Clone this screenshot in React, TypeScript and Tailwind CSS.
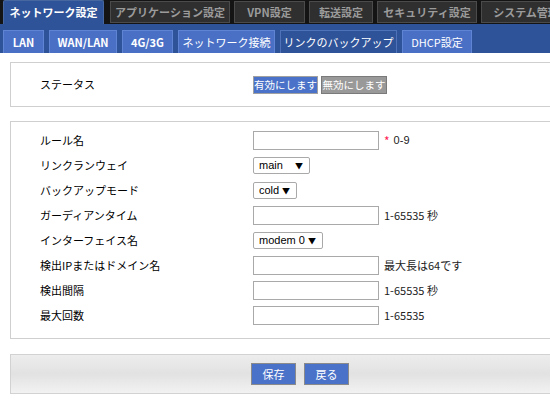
import React from "react";

const jp = "font-['Noto_Sans_CJK_JP','Noto_Sans',sans-serif]";

const TOP_TABS = [
  { label: "ネットワーク設定", cls: "w-[101px]", active: true },
  { label: "アプリケーション設定", cls: "w-[120px] ml-[2px]" },
  { label: "VPN設定", cls: "w-[71px]" },
  { label: "転送設定", cls: "w-[64px]" },
  { label: "セキュリティ設定", cls: "w-[100px]" },
  { label: "システム管理", cls: "w-[90px]" },
];

const SUB_TABS = [
  { label: "LAN", cls: "w-[41px] font-bold" },
  { label: "WAN/LAN", cls: "w-[68px] font-bold" },
  { label: "4G/3G", cls: "w-[51px] font-bold" },
  { label: "ネットワーク接続", cls: "w-[97px]" },
  { label: "リンクのバックアップ", cls: "w-[117px]", active: true },
  { label: "DHCP設定", cls: "w-[70px]" },
];

const Input = () => (
  <div className="w-[126px] h-[19px] border border-[#a9a9a9] bg-white" />
);

const Select = ({ value, w }: { value: string; w: string }) => (
  <div
    className={`${w} h-[17px] border border-[#a9a9a9] rounded-[2px] bg-white flex items-center justify-between pl-[5px] pr-[6px] text-[11px] text-black`}
  >
    <span className="font-['Liberation_Sans',sans-serif] leading-none">{value}</span>
    <span className="text-[8px] leading-none">▼</span>
  </div>
);

const Hint = ({ children }: { children: React.ReactNode }) => (
  <span className="ml-[5px] text-[11px] text-[#222] whitespace-nowrap">{children}</span>
);

const Row = ({ label, children }: { label: string; children: React.ReactNode }) => (
  <div className="h-[25px] flex items-center">
    <div className="w-[213px] text-[11px] text-black whitespace-nowrap">{label}</div>
    <div className="flex items-center">{children}</div>
  </div>
);

export default function App() {
  return (
    <div className={`w-[550px] h-[404px] overflow-hidden bg-white ${jp}`}>
      {/* top tabs */}
      <div className="h-6 bg-[#141414] flex items-start gap-[4px] pl-[3px] overflow-hidden">
        {TOP_TABS.map((t) =>
          t.active ? (
            <div
              key={t.label}
              className={`${t.cls} h-6 shrink-0 rounded-t-[2px] border border-b-0 border-[#46679f] bg-[#2f5399] text-white text-[11px] font-bold flex items-center justify-center whitespace-nowrap`}
            >
              {t.label}
            </div>
          ) : (
            <div
              key={t.label}
              className={`${t.cls} h-[22px] mt-[1px] shrink-0 border border-[#4b4b4b] bg-[#2f2f2f] text-[#9b9b9b] text-[11px] font-bold flex items-center justify-center whitespace-nowrap`}
            >
              {t.label}
            </div>
          )
        )}
      </div>

      {/* sub tabs */}
      <div className="h-[29px] bg-[#2f5399] flex items-end gap-[5px] pl-[3px]">
        {SUB_TABS.map((t) => (
          <div
            key={t.label}
            className={`${t.cls} h-[23px] shrink-0 border border-b-0 text-white text-[11px] flex items-center justify-center whitespace-nowrap ${
              t.active ? "bg-[#2f5399] border-[#5072b8]" : "bg-[#4a70c6] border-[#5f84d4]"
            }`}
          >
            {t.label}
          </div>
        ))}
      </div>

      {/* status panel */}
      <div className="mt-[9px] ml-[10px] w-[560px] h-[45px] border border-[#cfcfcf] flex items-center pl-[29px]">
        <div className="w-[213px] text-[11px] text-black">ステータス</div>
        <div className="flex gap-[3px]">
          <div className="w-[65px] h-[18px] border border-[#a0a0a0] bg-[#4a72c8] text-white text-[10.5px] flex items-center justify-center whitespace-nowrap">
            有効にします
          </div>
          <div className="w-[66px] h-[18px] border border-[#7a7a7a] bg-[#999999] text-white text-[10.5px] flex items-center justify-center whitespace-nowrap">
            無効にします
          </div>
        </div>
      </div>

      {/* settings panel */}
      <div className="mt-[14px] ml-[10px] w-[560px] border border-[#cfcfcf] pt-[6px] pb-[10px] pl-[29px]">
        <Row label="ルール名">
          <Input />
          <span className="ml-[5px] text-[12px] text-[#ff2255] leading-none">*</span>
          <span className="ml-[4px] text-[11px] text-[#222] font-['Liberation_Sans',sans-serif]">0-9</span>
        </Row>
        <Row label="リンクランウェイ">
          <Select value="main" w="w-[57px]" />
        </Row>
        <Row label="バックアップモード">
          <Select value="cold" w="w-[44px]" />
        </Row>
        <Row label="ガーディアンタイム">
          <Input />
          <Hint>1-65535 秒</Hint>
        </Row>
        <Row label="インターフェイス名">
          <Select value="modem 0" w="w-[70px]" />
        </Row>
        <Row label="検出IPまたはドメイン名">
          <Input />
          <Hint>最大長は64です</Hint>
        </Row>
        <Row label="検出間隔">
          <Input />
          <Hint>1-65535 秒</Hint>
        </Row>
        <Row label="最大回数">
          <Input />
          <Hint>1-65535</Hint>
        </Row>
      </div>

      {/* footer */}
      <div className="mt-[15px] ml-[10px] w-[560px] h-[40px] border border-[#d2d2d2] bg-gradient-to-b from-[#ededed] via-[#e2e2e2] to-[#f2f2f2] flex items-center pl-[240px] gap-[8px]">
        <div className="w-[45px] h-[22px] border border-[#8a8a8a] bg-[#4a72c8] text-white text-[11px] flex items-center justify-center">
          保存
        </div>
        <div className="w-[45px] h-[22px] border border-[#8a8a8a] bg-[#4a72c8] text-white text-[11px] flex items-center justify-center">
          戻る
        </div>
      </div>
    </div>
  );
}
